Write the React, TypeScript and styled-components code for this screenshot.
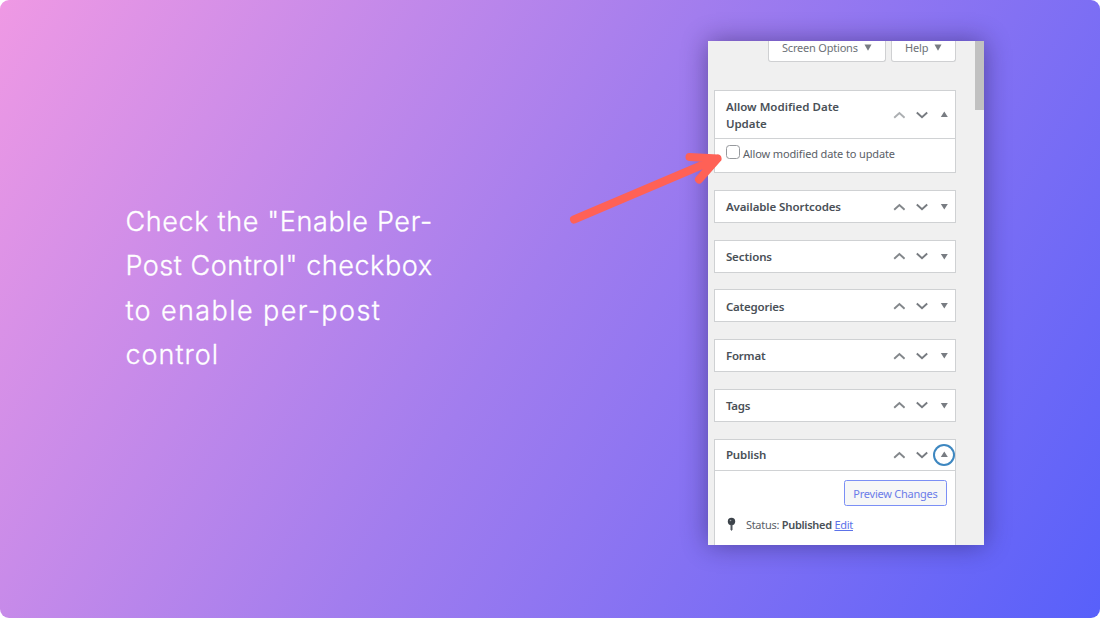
import React from "react";
import styled, { createGlobalStyle, css } from "styled-components";

const GlobalStyle = createGlobalStyle`
  html, body { margin: 0; padding: 0; background: #fff; }
  *, *::before, *::after { box-sizing: border-box; }
`;

const Slide = styled.main`
  position: relative;
  width: 1100px;
  height: 618px;
  display: flex;
  align-items: flex-start;
  overflow: hidden;
  border-radius: 9px;
  background: linear-gradient(121deg, #ef99e4 0%, #a27dee 48%, #5860fa 100%);
`;

const Caption = styled.h1`
  flex: none;
  width: 582px;
  margin: 0;
  padding: 200px 0 0 125.4px;
  color: #fff;
  font: 300 27px/44.4px Inter, "Liberation Sans", sans-serif;
  -webkit-text-stroke: 0.3px #fff;
`;

const CaptionLine = styled.span<{ $spacing: number }>`
  display: block;
  white-space: nowrap;
  letter-spacing: ${(p) => p.$spacing}px;
`;

const Screen = styled.section`
  flex: none;
  display: flex;
  justify-content: space-between;
  width: 276px;
  height: 504px;
  margin: 40.5px 0 0 126px;
  padding-left: 6.4px;
  overflow: hidden;
  background: #f0f0f0;
  box-shadow: 0 0 24px rgba(30, 20, 70, 0.48);
  font-family: "Noto Sans", "Open Sans", sans-serif;
  font-size: 11px;
  color: #5a6067;
`;

const Content = styled.div`
  width: 242px;
`;

const ScrollThumb = styled.div`
  width: 9px;
  height: 69px;
  background: #c1c1c1;
`;

const ScreenMeta = styled.div`
  display: flex;
  justify-content: flex-end;
  gap: 5px;
  height: 21px;
  margin-bottom: 28.9px;
`;

const MetaButton = styled.div<{ $width: number }>`
  display: flex;
  align-items: center;
  justify-content: center;
  gap: 6px;
  width: ${(p) => p.$width}px;
  padding-bottom: 5.5px;
  border: 1px solid #cfd0d2;
  border-top: 0;
  border-radius: 0 0 3px 3px;
  background: #fff;
  color: #6c7177;
`;

const Label = styled.span<{ $spacing?: number }>`
  white-space: nowrap;
  letter-spacing: ${(p) => p.$spacing ?? 0}px;
`;

const Postbox = styled.article`
  margin-bottom: 16.7px;
  border: 1px solid #cfd1d3;
  background: #fff;
`;

const BoxHeader = styled.header<{ $tall?: boolean; $open?: boolean }>`
  display: flex;
  align-items: center;
  justify-content: space-between;
  height: ${(p) => (p.$tall ? 48 : 31)}px;
  padding: 0 0 0 10.5px;
  ${(p) => p.$open && css`border-bottom: 1px solid #d0d2d4;`}
`;

const BoxTitle = styled.h2`
  margin: 0;
  padding-top: 0.6px;
  font-size: 11.5px;
  font-weight: 600;
  line-height: 17.5px;
  color: #4a5057;
`;

const Actions = styled.div`
  display: flex;
  align-items: center;
  gap: 10.5px;
`;

const Chevron = styled.svg`
  display: block;
  width: 12px;
  height: 8px;
  fill: none;
  stroke-width: 1.9;
`;

const Toggle = styled.span<{ $focused?: boolean }>`
  display: flex;
  align-items: center;
  justify-content: center;
  width: 22px;
  height: 22px;
  margin-left: -5px;
  border-radius: 50%;
  ${(p) => p.$focused && css`box-shadow: inset 0 0 0 2px #3e87c0;`}
`;

const Triangle = styled.svg`
  display: block;
  width: 8px;
  height: 7px;
  fill: #787c82;
`;

const CheckRow = styled.label`
  display: flex;
  align-items: flex-start;
  gap: 3px;
  height: 33px;
  padding: 6px 0 0 10.5px;
  line-height: 18px;
`;

const Checkbox = styled.span`
  width: 14px;
  height: 14px;
  border: 1px solid #96999d;
  border-radius: 3.5px;
  background: #fff;
`;

const PublishBody = styled.div`
  display: flex;
  flex-direction: column;
  height: 90px;
  padding: 9px 8.5px 0 12px;
`;

const PreviewButton = styled.button`
  align-self: flex-end;
  width: 103px;
  height: 26px;
  padding: 1px 0 0;
  border: 1px solid #7b8ff5;
  border-radius: 2.5px;
  background: #f6f7f7;
  color: #6b7ce9;
  font: inherit;
`;

const StatusRow = styled.div`
  display: flex;
  align-items: center;
  gap: 9.5px;
  height: 17px;
  margin-top: 10px;
`;

const Strong = styled.b`
  font-weight: 600;
  color: #4a5057;
`;

const EditLink = styled.a`
  color: #5c72e9;
  text-decoration: underline;
`;

const Arrow = styled.svg`
  position: absolute;
  left: 560px;
  top: 140px;
  width: 170px;
  height: 90px;
  fill: none;
  stroke: #ff6156;
  stroke-width: 8;
  stroke-linecap: round;
  stroke-linejoin: round;
`;

function Up({ muted }: { muted?: boolean }) {
  return (
    <Chevron viewBox="0 0 12 8" stroke={muted ? "#acafb2" : "#83878b"}>
      <path d="M1.2 6.7 6.4 2l5.2 4.7" />
    </Chevron>
  );
}

function Down() {
  return (
    <Chevron viewBox="0 0 12 8" stroke="#777b80">
      <path d="M.8 1.5 6 6.2l5.2-4.7" />
    </Chevron>
  );
}

function BoxActions({ open, focused, muted }: { open?: boolean; focused?: boolean; muted?: boolean }) {
  return (
    <Actions>
      <Up muted={muted} />
      <Down />
      <Toggle $focused={focused}>
        <Triangle viewBox="0 0 8 7">
          <path d={open ? "M4.3 .5 7.8 6h-7z" : "M.8 .9h7L4.3 6.5z"} />
        </Triangle>
      </Toggle>
    </Actions>
  );
}

function Caret() {
  return (
    <Triangle viewBox="0 0 8 7">
      <path d="M.5 .5h7L4 6.8z" />
    </Triangle>
  );
}

const collapsed = [
  { title: "Available Shortcodes", spacing: -0.1 },
  { title: "Sections", spacing: -0.1 },
  { title: "Categories", spacing: -0.2 },
  { title: "Format", spacing: -0.2 },
  { title: "Tags", spacing: -0.2 },
];

export default function App() {
  return (
    <>
      <GlobalStyle />
      <Slide>
        <Caption>
          <CaptionLine $spacing={0.65}>Check the "Enable Per-</CaptionLine>
          <CaptionLine $spacing={0.55}>Post Control" checkbox</CaptionLine>
          <CaptionLine $spacing={1.4}>to enable per-post</CaptionLine>
          <CaptionLine $spacing={1}>control</CaptionLine>
        </Caption>
        <Screen>
          <Content>
            <ScreenMeta>
              <MetaButton $width={118}><Label $spacing={-0.2}>Screen Options</Label><Caret /></MetaButton>
              <MetaButton $width={65.5}><Label $spacing={-0.2}>Help</Label><Caret /></MetaButton>
            </ScreenMeta>
            <Postbox>
              <BoxHeader $tall $open>
                <BoxTitle>
                  <Label $spacing={0.02}>Allow Modified Date</Label><br />
                  <Label $spacing={-0.05}>Update</Label>
                </BoxTitle>
                <BoxActions open muted />
              </BoxHeader>
              <CheckRow>
                <Checkbox />
                <Label $spacing={-0.13}>Allow modified date to update</Label>
              </CheckRow>
            </Postbox>
            {collapsed.map((b) => (
              <Postbox key={b.title}>
                <BoxHeader>
                  <BoxTitle><Label $spacing={b.spacing}>{b.title}</Label></BoxTitle>
                  <BoxActions />
                </BoxHeader>
              </Postbox>
            ))}
            <Postbox>
              <BoxHeader $open>
                <BoxTitle><Label $spacing={-0.1}>Publish</Label></BoxTitle>
                <BoxActions open focused />
              </BoxHeader>
              <PublishBody>
                <PreviewButton><Label $spacing={-0.25}>Preview Changes</Label></PreviewButton>
                <StatusRow>
                  <svg width="9" height="14" viewBox="0 0 9 14">
                    <circle cx="4.5" cy="4.5" r="3.7" fill="#3c434a" />
                    <path d="M3.5 7.5h2v5l-1 1.5-1-1.5z" fill="#50575e" />
                    <circle cx="3.5" cy="3.5" r=".8" fill="#a0a5aa" />
                  </svg>
                  <Label $spacing={-0.28}>Status: <Strong>Published</Strong> <EditLink>Edit</EditLink></Label>
                </StatusRow>
              </PublishBody>
            </Postbox>
          </Content>
          <ScrollThumb />
        </Screen>
        <Arrow viewBox="560 140 170 90">
          <path d="M574 219.5 717.5 158.5M689.5 157l28 1.5-18.5 21" />
        </Arrow>
      </Slide>
    </>
  );
}
